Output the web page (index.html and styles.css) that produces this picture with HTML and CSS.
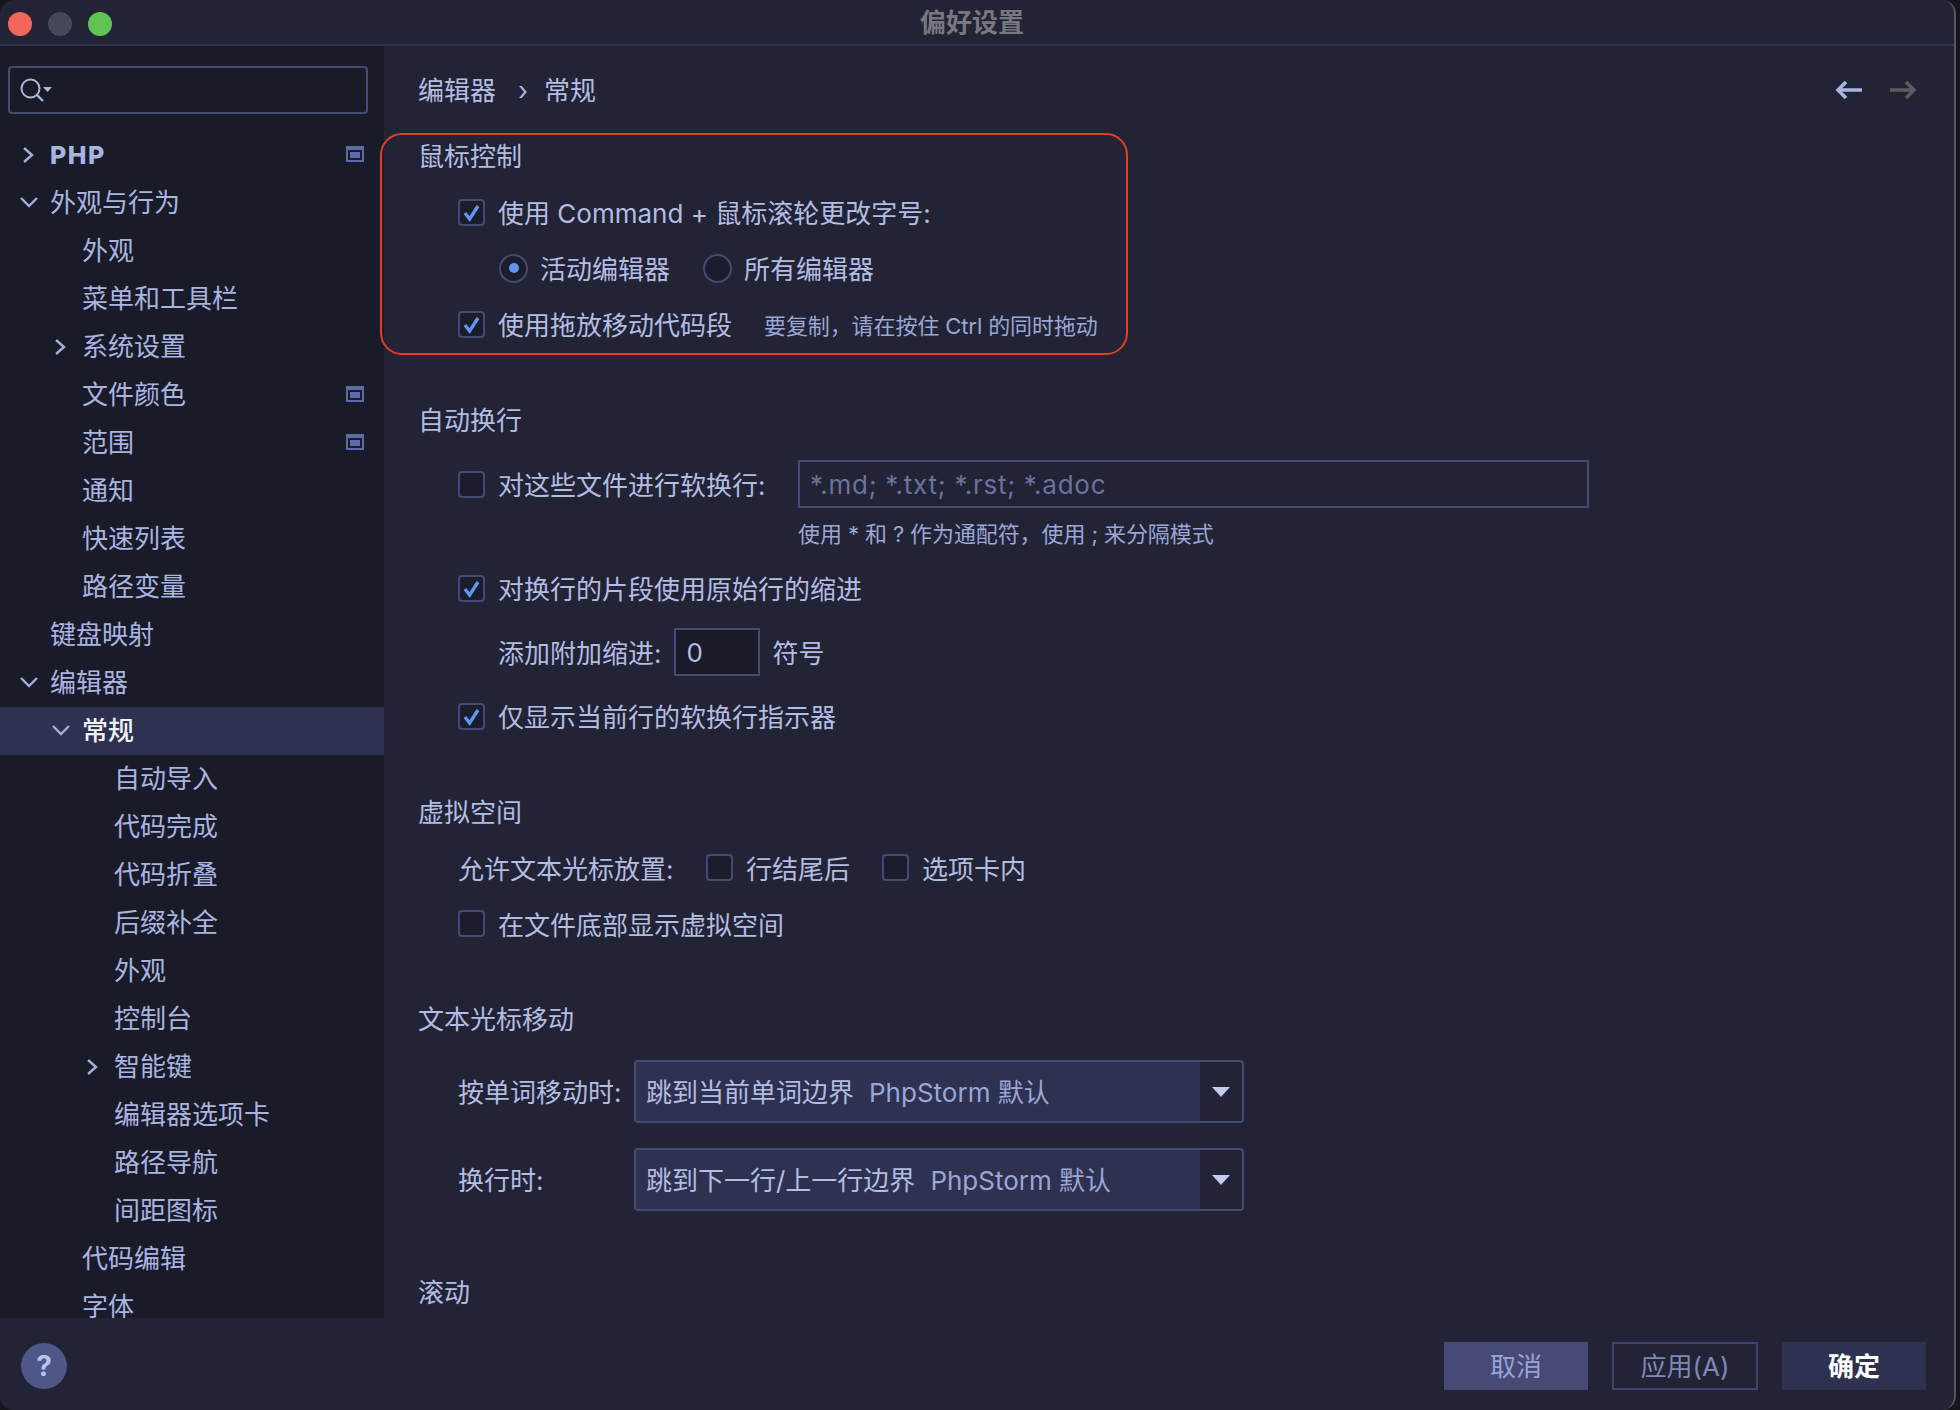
FILE: index.html
```html
<!DOCTYPE html>
<html lang="zh-CN">
<head>
<meta charset="utf-8">
<title>偏好设置</title>
<link rel="stylesheet" href="styles.css">
</head>
<body>
<div class="window">
  <header class="titlebar">
    <div class="lights"><span class="light red"></span><span class="light gray"></span><span class="light green"></span></div>
    <div class="title">偏好设置</div>
  </header>
  <div class="body">
    <aside class="sidebar">
      <div class="search">
        <svg width="34" height="26" viewBox="0 0 34 26"><circle cx="10.500" cy="10.500" r="9" fill="none" stroke="#aeb8dc" stroke-width="2"/><path d="M17 17l6 6" stroke="#aeb8dc" stroke-width="2.400" fill="none"/><path d="M23 9h9l-4.500 5z" fill="#aeb8dc"/></svg>
      </div>
      <nav class="tree">
        <div class="row l0 strong"><span class="chev"><svg width="18" height="18" viewBox="0 0 18 18"><path d="M4 2l8 7-8 7" class="cv"/></svg></span><span class="grow">PHP</span><svg class="proj" width="18" height="16" viewBox="0 0 18 16"><rect width="18" height="16" fill="#5f6aa8"/><rect x="2" y="4" width="14" height="10" fill="#1a1b29"/><rect x="4" y="6" width="10" height="6" fill="#5f6aa8"/></svg></div>
        <div class="row l0"><span class="chev"><svg width="18" height="14" viewBox="0 0 18 14"><path d="M1 2l8 8 8-8" class="cv"/></svg></span><span class="grow">外观与行为</span></div>
        <div class="row l1"><span class="chev"></span><span class="grow">外观</span></div>
        <div class="row l1"><span class="chev"></span><span class="grow">菜单和工具栏</span></div>
        <div class="row l1"><span class="chev"><svg width="18" height="18" viewBox="0 0 18 18"><path d="M4 2l8 7-8 7" class="cv"/></svg></span><span class="grow">系统设置</span></div>
        <div class="row l1"><span class="chev"></span><span class="grow">文件颜色</span><svg class="proj" width="18" height="16" viewBox="0 0 18 16"><rect width="18" height="16" fill="#5f6aa8"/><rect x="2" y="4" width="14" height="10" fill="#1a1b29"/><rect x="4" y="6" width="10" height="6" fill="#5f6aa8"/></svg></div>
        <div class="row l1"><span class="chev"></span><span class="grow">范围</span><svg class="proj" width="18" height="16" viewBox="0 0 18 16"><rect width="18" height="16" fill="#5f6aa8"/><rect x="2" y="4" width="14" height="10" fill="#1a1b29"/><rect x="4" y="6" width="10" height="6" fill="#5f6aa8"/></svg></div>
        <div class="row l1"><span class="chev"></span><span class="grow">通知</span></div>
        <div class="row l1"><span class="chev"></span><span class="grow">快速列表</span></div>
        <div class="row l1"><span class="chev"></span><span class="grow">路径变量</span></div>
        <div class="row l0"><span class="chev"></span><span class="grow">键盘映射</span></div>
        <div class="row l0"><span class="chev"><svg width="18" height="14" viewBox="0 0 18 14"><path d="M1 2l8 8 8-8" class="cv"/></svg></span><span class="grow">编辑器</span></div>
        <div class="row l1 selected"><span class="chev"><svg width="18" height="14" viewBox="0 0 18 14"><path d="M1 2l8 8 8-8" class="cv"/></svg></span><span class="grow">常规</span></div>
        <div class="row l2"><span class="chev"></span><span class="grow">自动导入</span></div>
        <div class="row l2"><span class="chev"></span><span class="grow">代码完成</span></div>
        <div class="row l2"><span class="chev"></span><span class="grow">代码折叠</span></div>
        <div class="row l2"><span class="chev"></span><span class="grow">后缀补全</span></div>
        <div class="row l2"><span class="chev"></span><span class="grow">外观</span></div>
        <div class="row l2"><span class="chev"></span><span class="grow">控制台</span></div>
        <div class="row l2"><span class="chev"><svg width="18" height="18" viewBox="0 0 18 18"><path d="M4 2l8 7-8 7" class="cv"/></svg></span><span class="grow">智能键</span></div>
        <div class="row l2"><span class="chev"></span><span class="grow">编辑器选项卡</span></div>
        <div class="row l2"><span class="chev"></span><span class="grow">路径导航</span></div>
        <div class="row l2"><span class="chev"></span><span class="grow">间距图标</span></div>
        <div class="row l1"><span class="chev"></span><span class="grow">代码编辑</span></div>
        <div class="row l1"><span class="chev"></span><span class="grow">字体</span></div>
      </nav>
    </aside>
    <main class="main">
      <div class="crumbs">
        <span>编辑器</span><span class="sep">›</span><span>常规</span>
        <div class="navs">
          <svg width="28" height="20" viewBox="0 0 28 20"><path d="M27 10H3M11 2l-8 8 8 8" fill="none" stroke="#a8b4e8" stroke-width="3.500"/></svg>
          <svg width="28" height="20" viewBox="0 0 28 20"><path d="M1 10h24M17 2l8 8-8 8" fill="none" stroke="#5c5c5f" stroke-width="3.500"/></svg>
        </div>
      </div>

      <section class="sec s1">
        <div class="highlight"></div>
        <h2 class="head">鼠标控制</h2>
        <div class="line"><span class="cb on"><svg width="19" height="19" viewBox="0 0 19 19"><path d="M3 10l4.600 6L16 3" class="tick"/></svg></span><span class="txt">使用 Command + 鼠标滚轮更改字号:</span></div>
        <div class="line sub"><span class="radio on"></span><span class="txt opt">活动编辑器</span><span class="radio"></span><span class="txt opt">所有编辑器</span></div>
        <div class="line"><span class="cb on"><svg width="19" height="19" viewBox="0 0 19 19"><path d="M3 10l4.600 6L16 3" class="tick"/></svg></span><span class="txt">使用拖放移动代码段</span><span class="txt hint inline">要复制，请在按住 Ctrl 的同时拖动</span></div>
      </section>

      <section class="sec s2">
        <h2 class="head">自动换行</h2>
        <div class="line wrap"><span class="cb"></span><span class="txt wraplabel">对这些文件进行软换行:</span><div class="field">*.md; *.txt; *.rst; *.adoc</div></div>
        <div class="hint under">使用 * 和 ? 作为通配符，使用 ; 来分隔模式</div>
        <div class="line l-a"><span class="cb on"><svg width="19" height="19" viewBox="0 0 19 19"><path d="M3 10l4.600 6L16 3" class="tick"/></svg></span><span class="txt">对换行的片段使用原始行的缩进</span></div>
        <div class="line sub indent"><span class="txt">添加附加缩进:</span><div class="num">0</div><span class="txt">符号</span></div>
        <div class="line l-b"><span class="cb on"><svg width="19" height="19" viewBox="0 0 19 19"><path d="M3 10l4.600 6L16 3" class="tick"/></svg></span><span class="txt">仅显示当前行的软换行指示器</span></div>
      </section>

      <section class="sec s3">
        <h2 class="head">虚拟空间</h2>
        <div class="line"><span class="txt low allow">允许文本光标放置:</span><span class="cb"></span><span class="txt low gapr">行结尾后</span><span class="cb"></span><span class="txt low">选项卡内</span></div>
        <div class="line"><span class="cb"></span><span class="txt low">在文件底部显示虚拟空间</span></div>
      </section>

      <section class="sec s4">
        <h2 class="head">文本光标移动</h2>
        <div class="combo-row"><span class="txt combo-label">按单词移动时:</span><div class="combo"><div class="combo-val">跳到当前单词边界<span class="dim">PhpStorm 默认</span></div><div class="combo-arrow"></div></div></div>
        <div class="combo-row"><span class="txt combo-label">换行时:</span><div class="combo"><div class="combo-val">跳到下一行/上一行边界<span class="dim">PhpStorm 默认</span></div><div class="combo-arrow"></div></div></div>
      </section>

      <section class="sec s5">
        <h2 class="head">滚动</h2>
      </section>
    </main>
  </div>
  <footer class="footer">
    <div class="help">?</div>
    <div class="btns">
      <button class="btn cancel">取消</button>
      <button class="btn apply">应用(A)</button>
      <button class="btn ok">确定</button>
    </div>
  </footer>
</div>
</body>
</html>
```
FILE: styles.css
```css
* { box-sizing: border-box; }
html, body { margin: 0; padding: 0; }
body {
  width: 1960px;
  height: 1410px;
  background: #15151c;
  font-family: Inter, "Noto Sans CJK SC", sans-serif;
  font-size: 26px;
  line-height: 30px;
  color: #b3bce2;
  overflow: hidden;
}
.window {
  width: 1956px;
  height: 1410px;
  background: #222335;
  border-right: 2px solid #55565e;
  border-radius: 14px;
  display: flex;
  flex-direction: column;
  overflow: hidden;
}
.titlebar {
  height: 46px;
  flex: none;
  border-bottom: 2px solid #2f3150;
  display: flex;
  align-items: center;
  justify-content: center;
  position: relative;
}
.lights {
  position: absolute;
  left: 8px;
  top: 12px;
  display: flex;
  gap: 16px;
}
.light { width: 24px; height: 24px; border-radius: 50%; }
.red { background: #f2675c; }
.gray { background: #44465a; }
.green { background: #5fc454; }
.title { color: #77787f; font-weight: 700; margin-right: 10px; padding-top: 2px; }
.body { height: 1272px; flex: none; display: flex; }
.sidebar {
  width: 384px;
  flex: none;
  background: #1a1b29;
  overflow: hidden;
  padding-top: 20px;
}
.search {
  width: 360px;
  height: 48px;
  margin-left: 8px;
  border: 2px solid #454a75;
  border-radius: 4px;
  padding: 10px 0 0 10px;
  display: flex;
}
.tree { margin-top: 17px; }
.row {
  height: 48px;
  display: flex;
  align-items: center;
  color: #a9b4e0;
  padding-right: 20px;
}
.l0 { padding-left: 12px; }
.l1 { padding-left: 44px; }
.l2 { padding-left: 76px; }
.chev { width: 38px; flex: none; display: flex; align-items: center; justify-content: flex-start; padding-left: 8px; }
.cv { fill: none; stroke: #a3aedc; stroke-width: 2.400; }
.grow { flex: 1; }
.strong { font-weight: 800; font-size: 25px; letter-spacing: 1.500px; }
.selected { background: #2e3150; color: #f0f2fb; font-weight: 500; }
.proj { flex: none; margin-bottom: 2px; }
.main { flex: 1; padding-left: 34px; }
.crumbs {
  height: 90px;
  display: flex;
  align-items: center;
  padding-bottom: 2px;
}
.crumbs > span { padding-top: 2px; }
.sep { margin: 0 16px 0 22px; color: #a9b4e0; }
.navs { margin-left: auto; margin-right: 37px; display: flex; gap: 26px; }
.sec { position: relative; }
.highlight {
  position: absolute;
  left: -38px;
  top: -3px;
  width: 748px;
  height: 222px;
  border: 2px solid #e33d26;
  border-radius: 22px;
  pointer-events: none;
}
.head { margin: 0; height: 42px; line-height: 42px; font-size: 26px; font-weight: 400; color: #b3bce2; }
.line { height: 56px; display: flex; align-items: center; padding-left: 40px; }
.txt { padding-top: 3px; }
.txt.low { padding-top: 5px; }
.s1 .head { margin-bottom: 6px; }
.s3 .head { margin-bottom: 5px; }
.cb {
  width: 27px;
  height: 27px;
  flex: none;
  border: 2px solid #454a75;
  border-radius: 4px;
  background: #1b1c2c;
  margin-right: 13px;
  display: flex;
  align-items: center;
  justify-content: center;
}
.tick { fill: none; stroke: #5f97ee; stroke-width: 3.400; }
.sub { padding-left: 81px; }
.radio {
  width: 29px;
  height: 29px;
  flex: none;
  border: 2px solid #454a75;
  border-radius: 50%;
  background: #1b1c2c;
  margin-right: 12px;
  display: flex;
  align-items: center;
  justify-content: center;
}
.radio.on::after { content: ""; width: 10px; height: 10px; border-radius: 50%; background: #5f97ee; }
.opt { margin-right: 33px; }
.hint { font-size: 22px; color: #9aa6d6; letter-spacing: -0.100px; }
.hint.inline { margin-left: 32px; }
.s2 { margin-top: 48px; }
.wrap { margin-top: 14px; }
.wraplabel { width: 300px; flex: none; }
.field {
  width: 791px;
  height: 48px;
  border: 2px solid #454a75;
  padding: 2px 0 0 10px;
  display: flex;
  align-items: center;
  color: #6a72a0;
  background: #222335;
  letter-spacing: 0.750px;
}
.hint.under { height: 30px; line-height: 30px; margin: 7px 0 0 380px; }
.l-a { margin-top: 11px; }
.indent { height: 48px; margin-top: 12px; padding-left: 80px; }
.num {
  width: 86px;
  height: 48px;
  margin: 0 13px 0 12px;
  border: 2px solid #454a75;
  background: #1a1b29;
  padding: 2px 0 0 11px;
  display: flex;
  align-items: center;
}
.l-b { margin-top: 12px; }
.s3 { margin-top: 48px; }
.allow { width: 248px; flex: none; }
.gapr { margin-right: 32px; }
.s4 { margin-top: 48px; }
.s4 .head { margin-bottom: 19px; }
.combo-row { height: 63px; display: flex; align-items: center; padding-left: 40px; margin-bottom: 25px; }
.combo-label { width: 176px; flex: none; }
.combo {
  width: 610px;
  height: 63px;
  border: 2px solid #454a75;
  border-radius: 4px;
  display: flex;
}
.combo-val {
  flex: 1;
  background: #2e3150;
  padding: 2px 0 0 10px;
  display: flex;
  align-items: center;
}
.dim { margin-left: 15px; color: #9aa6d6; }
.combo-arrow {
  width: 42px;
  flex: none;
  display: flex;
  align-items: center;
  justify-content: center;
}
.combo-arrow::after {
  content: "";
  border-left: 9px solid transparent;
  border-right: 9px solid transparent;
  border-top: 10px solid #c3cbf0;
}
.s5 { margin-top: 61px; }
.footer {
  flex: 1;
  display: flex;
  align-items: center;
  justify-content: space-between;
  padding: 4px 28px 0 21px;
}
.help {
  width: 46px;
  height: 46px;
  border-radius: 50%;
  background: #4f5688;
  color: #b9c3ee;
  font-weight: 700;
  font-size: 28px;
  display: flex;
  align-items: center;
  justify-content: center;
}
.btns { display: flex; gap: 24px; }
.btn {
  width: 144px;
  height: 48px;
  border: 0;
  padding: 2px 0 0;
  font: inherit;
}
.cancel { background: #464a75; color: #99a3d6; }
.apply { width: 146px; background: transparent; border: 2px solid #3f4470; color: #7f88b8; }
.ok { background: #2e3150; color: #fff; font-weight: 700; }
```
